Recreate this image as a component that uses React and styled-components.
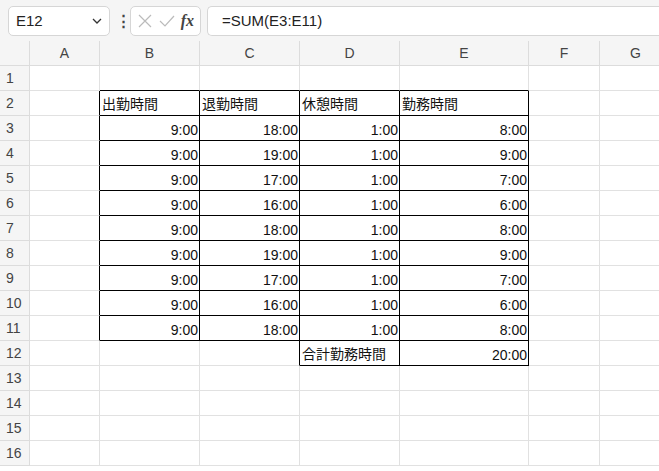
import styled, { createGlobalStyle } from 'styled-components';

const Global = createGlobalStyle`
  body { margin: 0; background: #fff; overflow: hidden; }
  * { box-sizing: border-box; }
`;

const Page = styled.div`
  width: 659px;
  height: 471px;
  overflow: hidden;
  font-family: "Liberation Sans", "Noto Sans CJK JP", sans-serif;
`;

const Bar = styled.div`
  height: 41px;
  display: flex;
  align-items: center;
  gap: 6px;
  padding: 0 0 0 8px;
  background: #f5f5f5;
`;

const Box = styled.div`
  height: 30px;
  background: #fff;
  border: 1px solid #d6d6d6;
  border-radius: 5px;
  display: flex;
  align-items: center;
  font-size: 15px;
  color: #222;
`;

const NameBox = styled(Box)`
  width: 102px;
  padding: 0 6px 0 7px;
  justify-content: space-between;
`;

const Dots = styled.div`
  width: 8px;
  color: #444;
  font-size: 15px;
  font-weight: bold;
  text-align: center;
`;

const FxBox = styled(Box)`
  width: 71px;
  padding: 0 6px;
  justify-content: space-between;
`;

const FxLabel = styled.span`
  font-family: "Liberation Serif", serif;
  font-style: italic;
  font-weight: bold;
  font-size: 16px;
  color: #444;
`;

const Formula = styled(Box)`
  flex: 1;
  padding-left: 14px;
  border-right: none;
  border-radius: 5px 0 0 5px;
`;

const Grid = styled.div`
  display: grid;
  grid-template-columns: 30px 70px 100px 100px 100px 129px 71px 72px;
  grid-auto-rows: 25px;
  width: 672px;
`;

const Head = styled.div`
  background: #f5f5f5;
  border-right: 1px solid #dcdcdc;
  border-bottom: 1px solid #dcdcdc;
  color: #444;
  font-size: 14px;
  display: flex;
  align-items: center;
  justify-content: ${(p) => (p.$row ? 'flex-start' : 'center')};
  padding-left: ${(p) => (p.$row ? '6px' : '0')};
`;

const Cell = styled.div`
  border-right: 1px solid ${(p) => (p.$br ? '#000' : '#e1e1e1')};
  border-bottom: 1px solid ${(p) => (p.$bb ? '#000' : '#e1e1e1')};
  border-left: ${(p) => (p.$bl ? '1px solid #000' : 'none')};
  font-size: 14px;
  color: #111;
  display: flex;
  align-items: flex-end;
  padding: 0 1px 2px 2px;
  justify-content: ${(p) => (p.$num ? 'flex-end' : 'flex-start')};
  white-space: nowrap;
`;

const cols = ['A', 'B', 'C', 'D', 'E', 'F', 'G'];
const ends = ['18:00', '19:00', '17:00', '16:00', '18:00', '19:00', '17:00', '16:00', '18:00'];
const works = ['8:00', '9:00', '7:00', '6:00', '8:00', '9:00', '7:00', '6:00', '8:00'];

const data = {};
['出勤時間', '退勤時間', '休憩時間', '勤務時間'].forEach((t, i) => (data[`2-${i + 1}`] = { t }));
for (let i = 0; i < 9; i++) {
  const r = i + 3;
  data[`${r}-1`] = { t: '9:00', num: true };
  data[`${r}-2`] = { t: ends[i], num: true };
  data[`${r}-3`] = { t: '1:00', num: true };
  data[`${r}-4`] = { t: works[i], num: true };
}
data['12-3'] = { t: '合計勤務時間' };
data['12-4'] = { t: '20:00', num: true };

const bordered = (r, c) => (r >= 2 && r <= 11 && c >= 1 && c <= 4) || (r === 12 && (c === 3 || c === 4));

export default function App() {
  const rows = [];
  for (let r = 1; r <= 16; r++) {
    rows.push(<Head key={`h${r}`} $row>{r}</Head>);
    cols.forEach((_, c) => {
      const d = data[`${r}-${c}`];
      const br = bordered(r, c) || bordered(r, c + 1);
      const bb = bordered(r, c) || bordered(r + 1, c);
      const bl = c === 0 && bordered(r, 0);
      rows.push(
        <Cell key={`${r}-${c}`} $br={br} $bb={bb} $bl={bl} $num={d?.num}>
          {d?.t}
        </Cell>
      );
    });
  }
  return (
    <Page>
      <Global />
      <Bar>
        <NameBox>
          E12
          <svg width="12" height="12" viewBox="0 0 12 12"><path d="M2 4l4 4 4-4" stroke="#333" strokeWidth="1.3" fill="none" /></svg>
        </NameBox>
        <Dots>⋮</Dots>
        <FxBox>
          <svg width="16" height="16" viewBox="0 0 16 16"><path d="M2 2l12 12M14 2L2 14" stroke="#bbb" strokeWidth="1.2" /></svg>
          <svg width="16" height="16" viewBox="0 0 16 16"><path d="M1 8l5 5 9-10" stroke="#bbb" strokeWidth="1.2" fill="none" /></svg>
          <FxLabel>fx</FxLabel>
        </FxBox>
        <Formula>=SUM(E3:E11)</Formula>
      </Bar>
      <Grid>
        <Head />
        {cols.map((c) => (
          <Head key={c}>{c}</Head>
        ))}
        {rows}
      </Grid>
    </Page>
  );
}
